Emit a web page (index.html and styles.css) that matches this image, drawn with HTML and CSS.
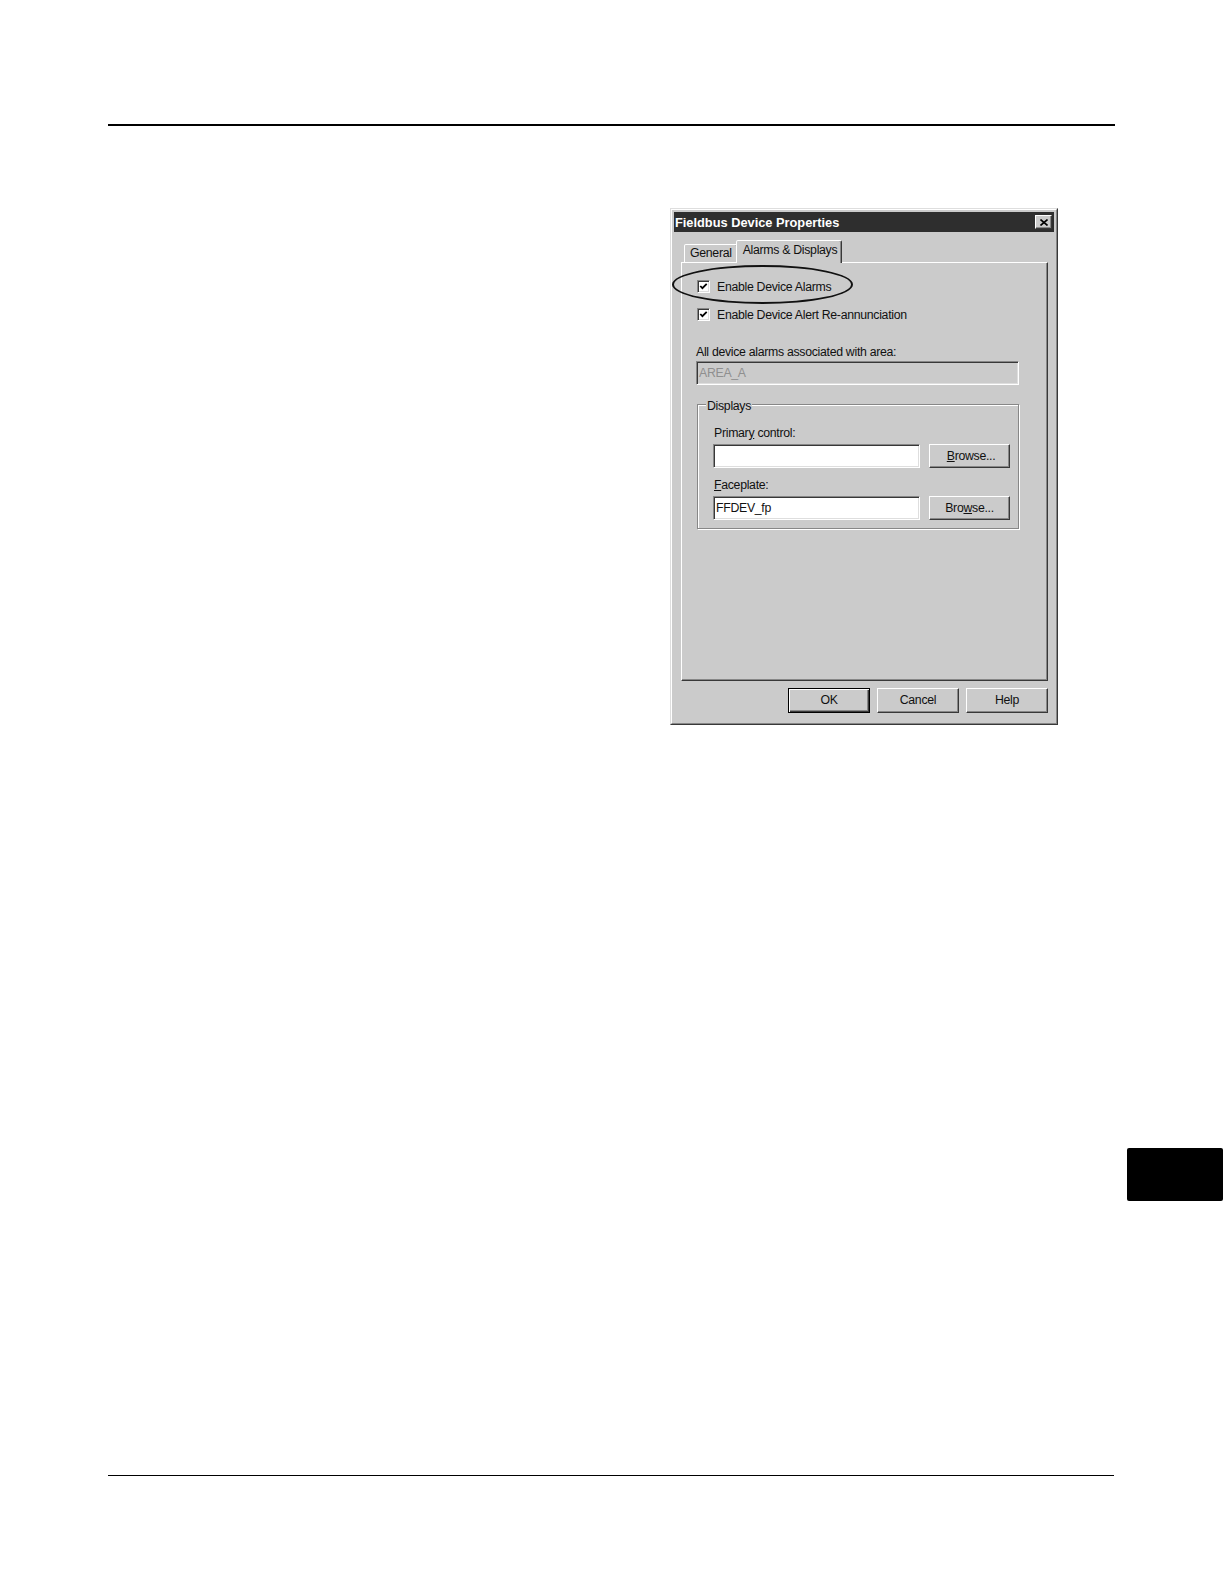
FILE: index.html
```html
<!DOCTYPE html>
<html lang="en">
<head>
<meta charset="utf-8">
<title>Fieldbus Device Properties</title>
<link rel="stylesheet" href="styles.css">
</head>
<body>
<div class="page">
  <div class="rule-top"></div>

  <div class="figure">
    <div class="dialog">
      <div class="dialog-frame">
        <div class="titlebar">
          <span class="title">Fieldbus Device Properties</span>
          <span class="close">
            <svg width="8" height="7" viewBox="0 0 8 7"><path d="M0.5 0.5 L7.5 6.5 M7.5 0.5 L0.5 6.5" stroke="#000" stroke-width="1.6" fill="none"/></svg>
          </span>
        </div>

        <div class="tabs">
          <div class="tab">General</div>
          <div class="tab active">Alarms &amp; Displays</div>
        </div>

        <div class="panel">
          <div class="check-row">
            <span class="checkbox"><svg width="9" height="9" viewBox="0 0 9 9"><polyline points="1.3,4 3.4,6.2 7.7,1.8" stroke="#000" stroke-width="1.8" fill="none"/></svg></span>
            <span>Enable Device Alarms</span>
          </div>
          <div class="check-row">
            <span class="checkbox"><svg width="9" height="9" viewBox="0 0 9 9"><polyline points="1.3,4 3.4,6.2 7.7,1.8" stroke="#000" stroke-width="1.8" fill="none"/></svg></span>
            <span>Enable Device Alert Re-annunciation</span>
          </div>

          <div class="field-label">All device alarms associated with area:</div>
          <div class="field disabled">AREA_A</div>

          <div class="group">
            <span class="legend">Displays</span>
            <div class="glabel">Primar<u>y</u> control:</div>
            <div class="input"></div>
            <div class="btn">&nbsp;<u>B</u>rowse...</div>
            <div class="glabel second"><u>F</u>aceplate:</div>
            <div class="input">FFDEV_fp</div>
            <div class="btn">Bro<u>w</u>se...</div>
          </div>
        </div>

        <div class="buttons">
          <div class="btn wide default">OK</div>
          <div class="btn wide">Cancel</div>
          <div class="btn wide">Help</div>
        </div>
      </div>
      <div class="ellipse"></div>
    </div>
  </div>

  <div class="thumb"></div>
  <div class="rule-bottom"></div>
</div>
</body>
</html>
```

FILE: styles.css
```css
body {
  margin: 0;
  background: #fff;
  font-family: "Liberation Sans", Arial, sans-serif;
  color: #111;
}

.page {
  width: 1224px;
  height: 1584px;
  padding-top: 124px;
  box-sizing: border-box;
  overflow: hidden;
}

.rule-top {
  margin-left: 108px;
  width: 1007px;
  height: 2px;
  background: #000;
}

.figure {
  margin: 82px 0 0 670px;
  width: 388px;
}

.dialog {
  position: relative;
  width: 388px;
  height: 517px;
  box-sizing: border-box;
  background: #cbcbcb;
  border: 1px solid;
  border-color: #dedede #383838 #383838 #dedede;
  font-size: 12.3px;
  letter-spacing: -0.3px;
}

.dialog-frame {
  height: 100%;
  box-sizing: border-box;
  border: 1px solid;
  border-color: #fff #878787 #878787 #fff;
  padding: 2px;
  display: flex;
  flex-direction: column;
}

.titlebar {
  height: 20px;
  flex: none;
  background: #2e2e2e;
  color: #fff;
  display: flex;
  align-items: center;
  justify-content: space-between;
  padding: 0 2px 0 1px;
}

.title {
  font-weight: bold;
  font-size: 12.8px;
  letter-spacing: 0;
}

.close {
  width: 17px;
  height: 14px;
  box-sizing: border-box;
  background: #cbcbcb;
  border: 1px solid;
  border-color: #fff #383838 #383838 #fff;
  box-shadow: inset -1px -1px 0 #878787;
  display: flex;
  align-items: center;
  justify-content: center;
}

.tabs {
  display: flex;
  align-items: flex-end;
  height: 22px;
  margin-top: 8px;
  padding-left: 10px;
  flex: none;
}

.tab {
  height: 18px;
  box-sizing: border-box;
  padding: 0 5px;
  border: 1px solid;
  border-bottom: none;
  border-color: #fff #383838 transparent #fff;
  box-shadow: inset -1px 0 0 #878787;
  border-radius: 2px 2px 0 0;
  line-height: 17px;
  background: #cbcbcb;
}

.tab.active {
  height: 23px;
  margin: 0 -2px -1px -2px;
  padding: 0 4px 0 6px;
  line-height: 19px;
  position: relative;
  z-index: 1;
}

.panel {
  height: 419px;
  flex: none;
  margin: 0 6px 0 7px;
  box-sizing: border-box;
  border: 1px solid;
  border-color: #fff #383838 #383838 #fff;
  box-shadow: inset -1px -1px 0 #878787;
  padding: 17px 0 0 15px;
}

.check-row {
  display: flex;
  align-items: center;
  gap: 7px;
  height: 13px;
}

.check-row + .check-row {
  margin-top: 15px;
}

.checkbox {
  width: 13px;
  height: 13px;
  box-sizing: border-box;
  background: #fff;
  border: 1px solid;
  border-color: #878787 #fff #fff #878787;
  box-shadow: inset 1px 1px 0 #383838, inset -1px -1px 0 #dedede;
  display: flex;
  align-items: center;
  justify-content: center;
  flex: none;
}

.field-label {
  margin: 24px 0 0 -1px;
  line-height: 14px;
}

.field {
  margin: 2px 0 0 -1px;
  width: 323px;
  height: 24px;
  box-sizing: border-box;
  border: 1px solid;
  border-color: #878787 #fff #fff #878787;
  box-shadow: inset 1px 1px 0 #383838, inset -1px -1px 0 #dedede;
  padding-left: 2px;
  line-height: 22px;
}

.field.disabled {
  color: #8f8f8f;
}

.group {
  position: relative;
  margin-top: 19px;
  width: 322px;
  height: 125px;
  box-sizing: border-box;
  border: 1px solid #878787;
  box-shadow: 1px 1px 0 #fff, inset 1px 1px 0 #fff;
  padding: 21px 0 0 15px;
  display: grid;
  grid-template-columns: 207px 81px;
  column-gap: 9px;
  align-content: start;
}

.legend {
  position: absolute;
  top: -6px;
  left: 8px;
  padding: 0 1px;
  line-height: 14px;
  background: #cbcbcb;
}

.glabel {
  grid-column: 1 / -1;
  line-height: 14px;
  padding-left: 1px;
  margin-bottom: 4px;
}

.glabel.second {
  margin-top: 10px;
}

.input {
  height: 24px;
  box-sizing: border-box;
  background: #fff;
  border: 1px solid;
  border-color: #878787 #fff #fff #878787;
  box-shadow: inset 1px 1px 0 #383838, inset -1px -1px 0 #dedede;
  padding-left: 2px;
  line-height: 22px;
}

.btn {
  height: 24px;
  box-sizing: border-box;
  background: #cbcbcb;
  border: 1px solid;
  border-color: #fff #383838 #383838 #fff;
  box-shadow: inset -1px -1px 0 #878787;
  text-align: center;
  line-height: 22px;
}

.buttons {
  display: flex;
  justify-content: flex-end;
  gap: 7px;
  margin: 7px 6px 0 0;
}

.btn.wide {
  width: 82px;
  height: 25px;
  line-height: 23px;
}

.btn.default {
  border: 1px solid #000;
  box-shadow: inset 1px 1px 0 #fff, inset -1px -1px 0 #383838, inset -2px -2px 0 #878787;
}

.ellipse {
  position: absolute;
  left: 1px;
  top: 56px;
  width: 181px;
  height: 39px;
  box-sizing: border-box;
  border: 2px solid #111;
  border-radius: 50%;
  z-index: 2;
}

.thumb {
  margin: 423px 0 0 1127px;
  width: 96px;
  height: 53px;
  background: #000;
  border-radius: 2px;
}

.rule-bottom {
  margin: 274px 0 0 108px;
  width: 1006px;
  height: 1px;
  background: #000;
}
```
